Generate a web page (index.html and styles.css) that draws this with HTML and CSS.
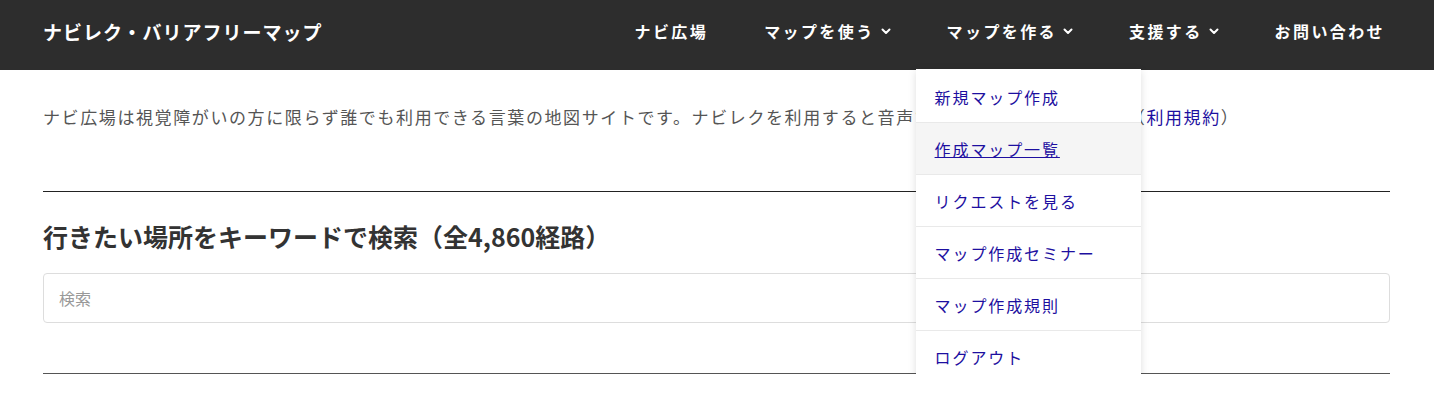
FILE: index.html
```html
<!DOCTYPE html>
<html lang="ja">
<head>
<meta charset="utf-8">
<title>ナビレク・バリアフリーマップ</title>
<link rel="stylesheet" href="styles.css">
</head>
<body>
<header class="site-header">
  <a class="logo" href="#">ナビレク・バリアフリーマップ</a>
  <nav class="main-nav">
    <ul class="nav-list">
      <li class="nav-item"><a href="#">ナビ広場</a></li>
      <li class="nav-item"><a href="#">マップを使う<svg class="chev" viewBox="0 0 10 7" width="10" height="7"><path d="M1.5 1.5 L5 5 L8.5 1.5" fill="none" stroke="currentColor" stroke-width="2" stroke-linecap="round" stroke-linejoin="round"/></svg></a></li>
      <li class="nav-item open"><a href="#">マップを作る<svg class="chev" viewBox="0 0 10 7" width="10" height="7"><path d="M1.5 1.5 L5 5 L8.5 1.5" fill="none" stroke="currentColor" stroke-width="2" stroke-linecap="round" stroke-linejoin="round"/></svg></a>
        <ul class="dropdown">
          <li><a href="#">新規マップ作成</a></li>
          <li class="active"><a href="#">作成マップ一覧</a></li>
          <li><a href="#">リクエストを見る</a></li>
          <li><a href="#">マップ作成セミナー</a></li>
          <li><a href="#">マップ作成規則</a></li>
          <li><a href="#">ログアウト</a></li>
        </ul>
      </li>
      <li class="nav-item"><a href="#">支援する<svg class="chev" viewBox="0 0 10 7" width="10" height="7"><path d="M1.5 1.5 L5 5 L8.5 1.5" fill="none" stroke="currentColor" stroke-width="2" stroke-linecap="round" stroke-linejoin="round"/></svg></a></li>
      <li class="nav-item"><a href="#">お問い合わせ</a></li>
    </ul>
  </nav>
</header>
<main class="content">
  <p class="intro">ナビ広場は視覚障がいの方に限らず誰でも利用できる言葉の地図サイトです。ナビレクを利用すると音声で経路の案内を聞けます。（<a href="#">利用規約</a>）</p>
  <hr class="rule">
  <h2 class="search-title">行きたい場所をキーワードで検索（全4,860経路）</h2>
  <input class="search-input" type="text" placeholder="検索">
  <hr class="rule rule-bottom">
</main>
</body>
</html>
```
FILE: styles.css
```css
* { box-sizing: border-box; }
body {
  margin: 0;
  font-family: "Noto Sans CJK JP", "Noto Sans", sans-serif;
  background: #fff;
  color: #555;
}
a { text-decoration: none; }

.site-header {
  height: 70px;
  background: #2d2d2d;
  display: flex;
  align-items: center;
  justify-content: space-between;
  padding: 0 21px 8px 43px;
  position: relative;
  z-index: 10;
}
.logo {
  color: #fff;
  font-weight: 700;
  font-size: 19px;
  letter-spacing: 1px;
}
.nav-list {
  list-style: none;
  margin: 0;
  padding: 0;
  display: flex;
}
.nav-item {
  position: relative;
  padding: 0 28px;
}
.nav-item > a {
  color: #fff;
  font-weight: 700;
  font-size: 16px;
  letter-spacing: 2.4px;
  display: flex;
  align-items: center;
}
.chev { margin-left: 6px; }

.dropdown {
  list-style: none;
  margin: 0;
  padding: 2px 0 0;
  position: absolute;
  left: -3px;
  top: 50px;
  width: 225px;
  background: #fff;
  box-shadow: 0 2px 8px rgba(0,0,0,0.13);
}
.dropdown li {
  height: 52px;
  display: flex;
  align-items: center;
  padding: 0 19px;
  border-bottom: 1px solid #e9e9e9;
}
.dropdown li:last-child { border-bottom: none; }
.dropdown li.active { background: #f5f5f5; }
.dropdown a {
  color: #1d0fa0;
  font-size: 16px;
  letter-spacing: 1.9px;
  white-space: nowrap;
}
.dropdown li.active a { text-decoration: underline; }

.content {
  padding: 33px 44px 0 43px;
}
.intro {
  margin: 0;
  font-size: 17px;
  line-height: 28px;
  letter-spacing: 1.6px;
  color: #555;
  white-space: nowrap;
}
.intro a { color: #1d0fa0; }
.rule {
  border: 0;
  border-top: 1px solid #222;
  margin: 60px 0 0;
}
.search-title {
  margin: 26px 0 0;
  font-size: 25px;
  line-height: 36px;
  font-weight: 700;
  color: #333;
}
.search-input {
  display: block;
  width: 100%;
  height: 50px;
  margin-top: 19px;
  border: 1px solid #ddd;
  border-radius: 4px;
  padding: 0 15px;
  font-family: inherit;
  font-size: 16px;
  color: #333;
}
.search-input::placeholder { color: #999; }
.rule-bottom {
  border-top-color: #555;
  margin-top: 50px;
}
```
